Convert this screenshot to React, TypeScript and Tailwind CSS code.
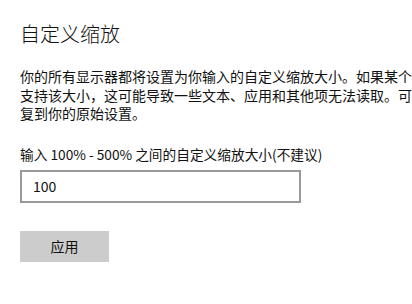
export default function App() {
  const font = { fontFamily: '"Noto Sans CJK SC", "Liberation Sans", sans-serif' };
  return (
    <div className="w-[412px] h-[304px] overflow-hidden bg-white text-[#111] pl-5" style={font}>
      {/* Title */}
      <h1 className="mt-[20px] text-[20px] leading-[28px] font-light whitespace-nowrap">自定义缩放</h1>

      {/* Description, the window cuts it at the right edge */}
      <div className="mt-[19px] text-[14px] leading-[18.5px] whitespace-nowrap">
        <div>你的所有显示器都将设置为你输入的自定义缩放大小。如果某个</div>
        <div>支持该大小，这可能导致一些文本、应用和其他项无法读取。可</div>
        <div>复到你的原始设置。</div>
      </div>

      {/* Scale input */}
      <div className="mt-[22px] text-[13.7px] leading-[18px] whitespace-nowrap">
        输入 100% - 500% 之间的自定义缩放大小(不建议)
      </div>
      <div className="mt-[7px] flex items-center w-[281px] h-[33px] border-2 border-[#999] px-[11px] text-[14px]">
        100
      </div>

      {/* Apply */}
      <button className="mt-[28px] flex items-center justify-center w-[89px] h-[31px] bg-[#ccc] text-[14px]">
        应用
      </button>
    </div>
  );
}
